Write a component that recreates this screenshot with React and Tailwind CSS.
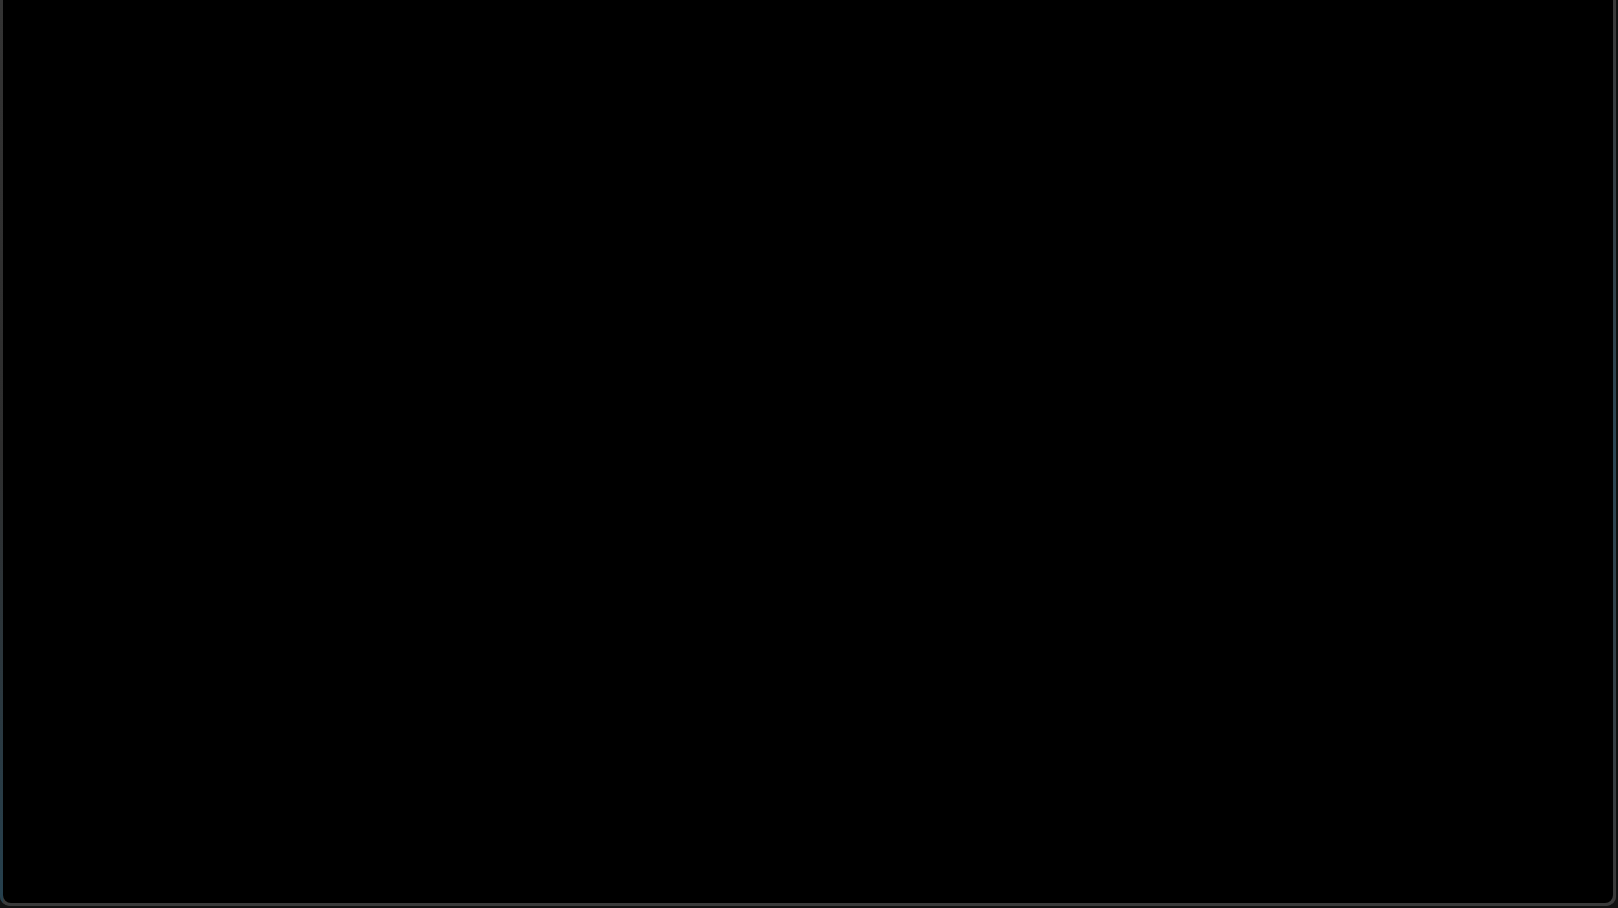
export default function App() {
  return (
    <div className="h-[908px] w-full bg-[#111] overflow-hidden">
      <div className="h-[906px] w-[1616px] flex flex-col rounded-b-[10px] overflow-hidden bg-[#3a3a3a]">
        <div className="flex flex-1">
          {/* left edge, blue glow towards the bottom */}
          <div className="w-[3px] bg-gradient-to-b from-[#333333] via-[#2e2e2e] to-[#25404e]" />
          <div className="flex-1 bg-black rounded-b-[8px]" />
          {/* right edge, blue glow near the top */}
          <div className="w-[3px] bg-gradient-to-b from-[#3a3a3a] via-[#2b4654] to-[#3a3a3a]" />
        </div>
        <div className="h-[3px] bg-[#3a3a3a]" />
      </div>
    </div>
  );
}
